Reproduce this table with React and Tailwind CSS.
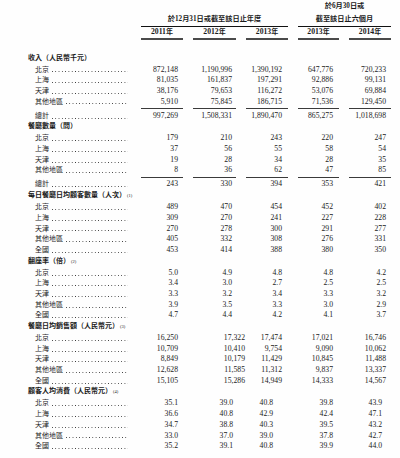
import React from "react";

const cols = "grid grid-cols-[131px_42px_43px_42px_41px_42px] gap-x-[10px]";

const padsDefault = ["pr-[5px]", "pr-[4px]", "pr-[6px]", "pr-[6px]", "pr-[5px]"];
const padsSales = ["pr-[5px]", "-mr-[9px]", "pr-[6px]", "pr-[6px]", "pr-[5px]"];
const padsSpend = ["pr-[5px]", "pr-[3px]", "pr-[15px]", "pr-[6px]", "pr-[9px]"];

const sections = [
  {
    title: "收入（人民幣千元）",
    pads: padsDefault,
    rows: [
      ["北京", "872,148", "1,190,996", "1,390,192", "647,776", "720,233"],
      ["上海", "81,035", "161,837", "197,291", "92,886", "99,131"],
      ["天津", "38,176", "79,653", "116,272", "53,076", "69,884"],
      ["其他地區", "5,910", "75,845", "186,715", "71,536", "129,450"],
    ],
    total: ["總計", "997,269", "1,508,331", "1,890,470", "865,275", "1,018,698"],
  },
  {
    title: "餐廳數量（間）",
    pads: padsDefault,
    rows: [
      ["北京", "179", "210", "243", "220", "247"],
      ["上海", "37", "56", "55", "58", "54"],
      ["天津", "19", "28", "34", "28", "35"],
      ["其他地區", "8", "36", "62", "47", "85"],
    ],
    total: ["總計", "243", "330", "394", "353", "421"],
  },
  {
    title: "每日餐廳日均顧客數量（人次）",
    note: "(1)",
    pads: padsDefault,
    rows: [
      ["北京", "489", "470", "454", "452", "402"],
      ["上海", "309", "270", "241", "227", "228"],
      ["天津", "270", "278", "300", "291", "277"],
      ["其他地區", "405", "332", "308", "276", "331"],
      ["全國", "453", "414", "388", "380", "350"],
    ],
  },
  {
    title: "翻座率（倍）",
    note: "(2)",
    pads: padsDefault,
    rows: [
      ["北京", "5.0", "4.9", "4.8", "4.8", "4.2"],
      ["上海", "3.4", "3.0", "2.7", "2.5", "2.5"],
      ["天津", "3.3", "3.2", "3.4", "3.3", "3.2"],
      ["其他地區", "3.9", "3.5", "3.3", "3.0", "2.9"],
      ["全國", "4.7", "4.4", "4.2", "4.1", "3.7"],
    ],
  },
  {
    title: "餐廳日均銷售額（人民幣元）",
    note: "(3)",
    pads: padsSales,
    rows: [
      ["北京", "16,250", "17,322", "17,474", "17,021", "16,746"],
      ["上海", "10,709", "10,410", "9,754", "9,090", "10,062"],
      ["天津", "8,849", "10,179", "11,429", "10,845", "11,488"],
      ["其他地區", "12,628", "11,585", "11,312", "9,837", "13,337"],
      ["全國", "15,105", "15,286", "14,949", "14,333", "14,567"],
    ],
  },
  {
    title: "顧客人均消費（人民幣元）",
    note: "(4)",
    pads: padsSpend,
    rows: [
      ["北京", "35.1", "39.0", "40.8", "39.8", "43.9"],
      ["上海", "36.6", "40.8", "42.9", "42.4", "47.1"],
      ["天津", "34.7", "38.8", "40.3", "39.5", "43.2"],
      ["其他地區", "33.0", "37.0", "39.0", "37.8", "42.7"],
      ["全國", "35.2", "39.1", "40.8", "39.9", "44.0"],
    ],
  },
];

const Row = ({ cells, pads }) => (
  <div className={cols + " h-[10.7px] leading-[10.7px]"}>
    <div className="flex pl-[35px] pr-[3px] min-w-0">
      <span className="text-[7px] shrink-0">{cells[0]}</span>
      {/* dot leader */}
      <span className="flex-1 ml-[3px] self-end mb-[2.6px] h-[1.2px] bg-[linear-gradient(to_right,#3a3a3a_1.2px,transparent_1.2px)] bg-[length:3.3px_1.2px] bg-repeat-x" />
    </div>
    {cells.slice(1).map((v, i) => (
      <div key={i} className={"text-right text-[7.7px] whitespace-nowrap " + pads[i]}>
        {v}
      </div>
    ))}
  </div>
);

const Section = ({ s }) => (
  <div>
    <div className="h-[12px] leading-[11px] pl-[28px] font-bold text-[7px]">
      {s.title}
      {s.note && <span className="align-top text-[4.5px] ml-[1px] font-normal">{s.note}</span>}
    </div>
    {s.rows.map((r, i) => (
      <Row key={i} cells={r} pads={s.pads} />
    ))}
    {s.total && (
      <>
        <div className={cols + " h-[3.4px]"}>
          <div />
          {[0, 1, 2, 3, 4].map((i) => (
            <div key={i} className="mt-[0.5px] h-[1.5px] bg-[#3a3a3a]" />
          ))}
        </div>
        <Row cells={s.total} pads={s.pads} />
      </>
    )}
  </div>
);

const App = () => {
  return (
    <div className="w-[400px] h-[458px] overflow-hidden bg-[#fefefe] text-[#1b1b1b] font-['Liberation_Serif','Noto_Sans_CJK_TC',serif]">
      <div className={cols}>
        <div />
        <div className="col-span-3 h-[27px] flex items-end justify-center border-b border-[#111] font-bold text-[7.2px] leading-[13px]">
          於12月31日或截至該日止年度
        </div>
        <div className="col-span-2 h-[27px] flex flex-col justify-end items-center border-b border-[#111] font-bold text-[7.2px] leading-[13px]">
          <span>於6月30日或</span>
          <span>截至該日止六個月</span>
        </div>
      </div>
      <div className={cols}>
        <div />
        {["2011", "2012", "2013", "2013", "2014"].map((y, i) => (
          <div
            key={i}
            className="text-center font-bold text-[7.7px] leading-[10px] pb-[1px] border-b-2 border-[#4a4a4a]"
          >
            {y}
            <span className="text-[7px]">年</span>
          </div>
        ))}
      </div>
      <div className="mt-[12.5px]">
        {sections.map((s, i) => (
          <Section key={i} s={s} />
        ))}
      </div>
    </div>
  );
};

export default App;
